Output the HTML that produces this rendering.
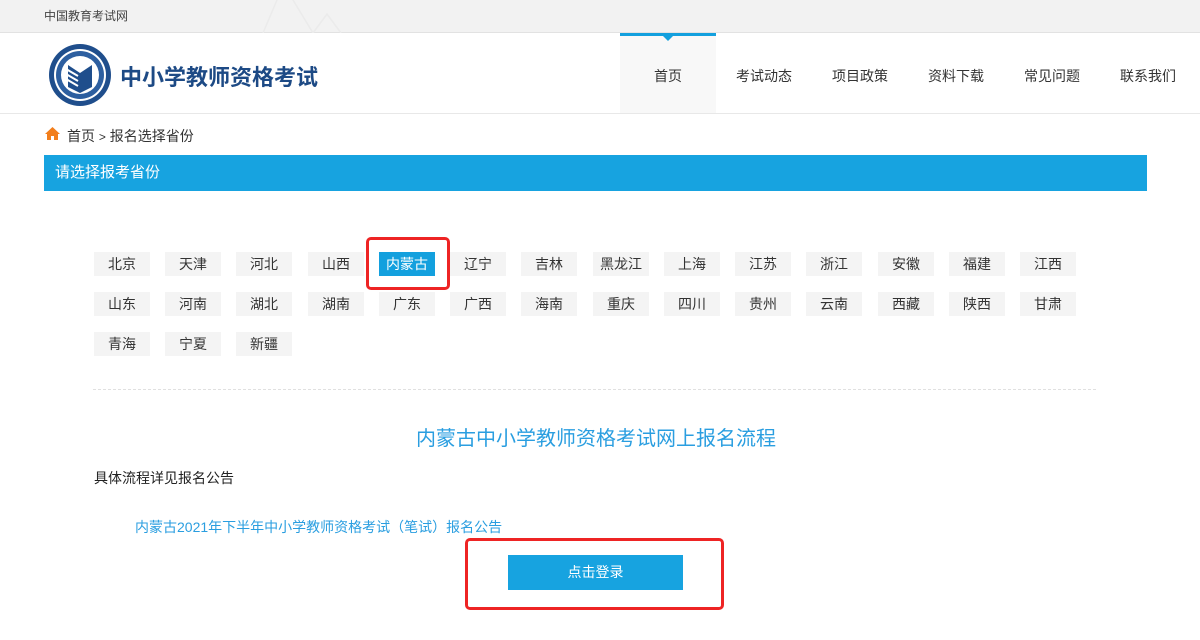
<!DOCTYPE html>
<html><head><meta charset="utf-8"><style>
*{margin:0;padding:0;box-sizing:border-box}
body{width:1200px;height:640px;background:#fff;position:relative;overflow:hidden;font-family:"Liberation Sans","Noto Sans CJK SC",sans-serif;color:#333}
.abs{position:absolute}
.top{left:0;top:0;width:1200px;height:33px;background:#f2f2f2;border-bottom:1px solid #e2e2e2}
.hdr{left:0;top:33px;width:1200px;height:81px;background:#fff;border-bottom:1px solid #e8e8e8}
.nav{top:33px;height:80px;width:96px;text-align:center;line-height:86px;font-size:14px;color:#333}
.p{height:24px;width:56px;background:#f4f4f4;text-align:center;line-height:24px;font-size:14px;color:#333}
.sel{background:#13a0de;color:#fff}
.red{border:3px solid #ee2424;border-radius:5px}
</style></head><body>
<div class="abs top"></div>
<svg class="abs" style="left:255px;top:0" width="90" height="33"><path d="M22 0 L8 33 M38 0 L58 33 M58 33 L72 14 L86 33" stroke="#ebebeb" stroke-width="1.5" fill="none"/></svg>
<div class="abs" style="left:44px;top:7px;font-size:12px;color:#444">中国教育考试网</div>
<div class="abs hdr"></div>
<svg class="abs" style="left:48px;top:43px" width="64" height="64" viewBox="0 0 64 64">
<circle cx="32" cy="32" r="31" fill="#1f4e8c"/><circle cx="32" cy="32" r="26" fill="#fff"/><circle cx="32" cy="32" r="24" fill="#2d5fa0"/><circle cx="32" cy="32" r="19" fill="#fff"/>
<path d="M20 22 L32 30 L44 22 L44 44 L32 50 L20 44 Z" fill="#1f4e8c"/>
<path d="M18 26 L30 33 M18 31 L30 38 M18 36 L30 43" stroke="#fff" stroke-width="2"/>
</svg>
<div class="abs" style="left:120px;top:60px;font-size:22px;font-weight:bold;color:#1d4a85">中小学教师资格考试</div>
<div class="abs" style="left:620px;top:33px;width:96px;height:80px;background:#f8f8f8;border-top:3px solid #13a0de"></div>
<svg class="abs" style="left:662px;top:35px" width="12" height="7"><path d="M0 0 L12 0 L6 6 Z" fill="#13a0de"/></svg>
<div class="abs nav" style="left:620px">首页</div>
<div class="abs nav" style="left:716px">考试动态</div>
<div class="abs nav" style="left:812px">项目政策</div>
<div class="abs nav" style="left:908px">资料下载</div>
<div class="abs nav" style="left:1004px">常见问题</div>
<div class="abs nav" style="left:1100px">联系我们</div>
<svg class="abs" style="left:45px;top:127px" width="15" height="13"><path d="M7.5 0 L15 7 L13 7 L13 13 L9 13 L9 9 L6 9 L6 13 L2 13 L2 7 L0 7 Z" fill="#f27e1c"/></svg>
<div class="abs" style="left:67px;top:126px;font-size:14px;color:#333">首页 <span style="font-size:12px">&gt;</span> 报名选择省份</div>
<div class="abs" style="left:44px;top:155px;width:1103px;height:36px;background:#17a3e0;color:#fff;font-size:15px;line-height:35px;padding-left:11px">请选择报考省份</div>
<div id="pv"></div>
<div class="abs red" style="left:366px;top:237px;width:84px;height:53px"></div>
<div class="abs" style="left:93px;top:389px;width:1003px;border-top:1px dashed #e0e0e0"></div>
<div class="abs" style="left:0;top:422px;width:1192px;text-align:center;font-size:20px;color:#2a9ee0">内蒙古中小学教师资格考试网上报名流程</div>
<div class="abs" style="left:94px;top:468px;font-size:14px;color:#222">具体流程详见报名公告</div>
<div class="abs" style="left:135px;top:517px;font-size:14px;color:#2a9ee0">内蒙古2021年下半年中小学教师资格考试（笔试）报名公告</div>
<div class="abs red" style="left:465px;top:538px;width:259px;height:72px"></div>
<div class="abs" style="left:508px;top:555px;width:175px;height:35px;background:#17a3e0;color:#fff;text-align:center;line-height:35px;font-size:14px">点击登录</div>
<script>
var r=[["北京","天津","河北","山西","内蒙古","辽宁","吉林","黑龙江","上海","江苏","浙江","安徽","福建","江西"],["山东","河南","湖北","湖南","广东","广西","海南","重庆","四川","贵州","云南","西藏","陕西","甘肃"],["青海","宁夏","新疆"]];
var h="";r.forEach(function(row,j){row.forEach(function(n,i){h+='<div class="abs p'+(n=="内蒙古"?" sel":"")+'" style="left:'+Math.round(94+i*71.23)+'px;top:'+(252+j*40)+'px">'+n+'</div>';});});
document.getElementById("pv").innerHTML=h;
</script>
</body></html>
